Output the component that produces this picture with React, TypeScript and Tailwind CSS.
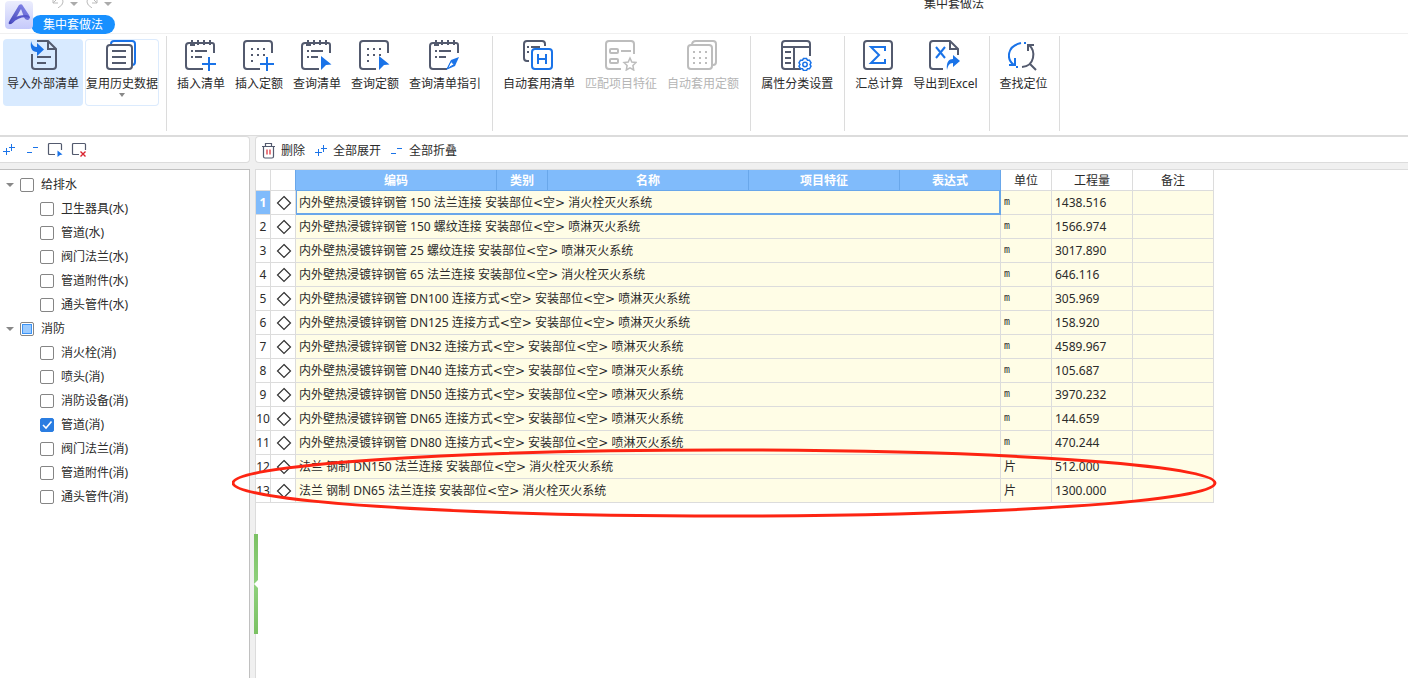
import React from "react";

const INK = "#535a6e";
const BLUE = "#1a73e8";
const MUTED = "#bdbdbd";

interface IconProps {
  children: React.ReactNode;
  color?: string;
}

const Icon: React.FC<IconProps> = ({ children, color = INK }) => (
  <svg className="h-8 w-8 shrink-0" viewBox="0 0 32 32" fill="none" stroke={color} strokeWidth="2" aria-hidden="true">
    {children}
  </svg>
);

const Dots: React.FC<{ points: number[][] }> = ({ points }) => (
  <g fill="currentColor" stroke="none">
    {points.map(([x, y]) => (
      <rect key={`${x}-${y}`} x={x} y={y} width="2" height="2" />
    ))}
  </g>
);

const Notepad = () => (
  <>
    <path d="M29 14V6q0-2-2-2H4Q1 4 1 7v20q0 3 3 3h14" />
    <path d="M7 1v5M13 1v5M19 1v5M25 1v5" />
    <path d="M5 4h5v3H5z" fill={INK} stroke="none" />
    <path d="M6 12h2M10 12h12M6 18h2M10 18h7" />
  </>
);

const DotSheet = () => (
  <>
    <path d="M29 14V5q0-3-3-3H4Q1 2 1 5v22q0 3 3 3h13" />
    <g className="text-[#535a6e]">
      <Dots points={[[8, 9], [14, 9], [20, 9], [8, 15], [14, 15], [20, 15], [8, 21]]} />
    </g>
  </>
);

const Plus = () => <path d="M24 18v14M17 25h14" stroke={BLUE} />;
const Pointer = () => <path d="M20 17l10.500 8.500-5.500.5-5 5z" fill={BLUE} stroke="none" />;

const icons = {
  importList: (
    <Icon>
      <path d="M5 15v12q0 3 3 3h18q3 0 3-3V10l-8-8H10" />
      <path d="M21 2v8h8M10 18h14M10 24h9" />
      <path d="M4 3v-1C5 6 7 8 10 8V4l7 6.500-7 6.500v-4C5 13 3 9 4 3z" fill={BLUE} stroke="none" />
    </Icon>
  ),
  history: (
    <Icon>
      <path d="M5 5q0-3 3-3h18q3 0 3 3v18q0 3-3 3" stroke={BLUE} />
      <rect x="1" y="6" width="25" height="24" rx="3" />
      <path d="M6 12h14M6 18h14M6 24h14" />
    </Icon>
  ),
  insertList: <Icon><Notepad /><Plus /></Icon>,
  insertQuota: <Icon><DotSheet /><Plus /></Icon>,
  queryList: <Icon><Notepad /><Pointer /></Icon>,
  queryQuota: <Icon><DotSheet /><Pointer /></Icon>,
  guide: (
    <Icon>
      <Notepad />
      <path d="M30 18l-8 3-5 10 9-4z" fill={BLUE} stroke="none" />
      <path d="M18.500 29.500l3.500-7 3 3z" fill="#fff" stroke={BLUE} strokeWidth="1" />
    </Icon>
  ),
  autoList: (
    <Icon>
      <path d="M22 7V5q0-3-3-3H4Q1 2 1 5v14q0 3 3 3h2M4 8h2M8 8h9M4 13h2" />
      <rect x="9" y="10" width="20" height="20" rx="3" stroke={BLUE} />
      <path d="M15 15v10M23 15v10M15 20h8" stroke={BLUE} />
    </Icon>
  ),
  matchFeature: (
    <Icon color={MUTED}>
      <path d="M29 15V5q0-3-3-3H4Q1 2 1 5v22q0 3 3 3h12M16 12h10" />
      <rect x="5" y="10" width="8" height="4" rx="1" />
      <rect x="5" y="20" width="8" height="4" rx="1" />
      <path d="M25 19l1.800 4 4.200.5-3.100 3 .8 4.500-3.700-2.200-3.700 2.200.8-4.500-3.100-3 4.200-.5z" strokeWidth="1.500" />
    </Icon>
  ),
  autoQuota: (
    <Icon color={MUTED}>
      <path d="M5 6q0-4 4-4h17q3 0 3 3v18q0 3-3 3" />
      <rect x="1" y="6" width="24" height="24" rx="3" />
      <g className="text-[#bdbdbd]">
        <Dots points={[[6, 12], [12, 12], [18, 12], [6, 18], [12, 18], [18, 18], [6, 23], [12, 23], [18, 23]]} />
      </g>
    </Icon>
  ),
  attributes: (
    <Icon>
      <path d="M29 17V5q0-3-3-3H4Q1 2 1 5v22q0 3 3 3h16M1 8h28M13 8v22M4 13h6M4 19h6M4 24h6" />
      <path d="M22.500 19.500h3l1 1.700h2l1.500 2.600-1 1.700 1 1.700-1.500 2.600h-2l-1 1.700h-3l-1-1.700h-2L18 27.200l1-1.700-1-1.700 1.500-2.600h2z" stroke={BLUE} strokeWidth="1.500" />
      <circle cx="24" cy="25.500" r="2.200" stroke={BLUE} strokeWidth="1.500" />
    </Icon>
  ),
  sum: (
    <Icon>
      <rect x="1" y="2" width="28" height="28" rx="3" />
      <path d="M22 12V8H8l8 8-8 8h14v-4" stroke={BLUE} />
    </Icon>
  ),
  exportExcel: (
    <Icon>
      <path d="M14 30H4q-3 0-3-3V5q0-3 3-3h17l8 8v6" />
      <path d="M21 2v8h8" />
      <path d="M7 8l9 11M16 8L7 19" stroke={BLUE} />
      <path d="M18 31c-1-8 2-11 6-11v-4l7 6-7 6v-4c-4 0-5 3-6 7z" fill={BLUE} stroke="none" />
    </Icon>
  ),
  locate: (
    <Icon>
      <path d="M13 4C-1 7-2 20 6 26M1 26h6v-7M16 4h2M8 28h2" stroke={BLUE} />
      <path d="M20 12V6h6M21 6c7 6 6 21-7 22M22 25l6 6" />
    </Icon>
  ),
};

interface Action {
  label: string;
  icon: React.ReactNode;
  disabled?: boolean;
}

const ribbonGroups: Action[][] = [
  [
    { label: "插入清单", icon: icons.insertList },
    { label: "插入定额", icon: icons.insertQuota },
    { label: "查询清单", icon: icons.queryList },
    { label: "查询定额", icon: icons.queryQuota },
    { label: "查询清单指引", icon: icons.guide },
  ],
  [
    { label: "自动套用清单", icon: icons.autoList },
    { label: "匹配项目特征", icon: icons.matchFeature, disabled: true },
    { label: "自动套用定额", icon: icons.autoQuota, disabled: true },
  ],
  [{ label: "属性分类设置", icon: icons.attributes }],
  [
    { label: "汇总计算", icon: icons.sum },
    { label: "导出到Excel", icon: icons.exportExcel },
  ],
  [{ label: "查找定位", icon: icons.locate }],
];

type CheckState = "off" | "on" | "mixed";

interface TreeNode {
  label: string;
  state: CheckState;
  children?: TreeNode[];
}

const tree: TreeNode[] = [
  {
    label: "给排水",
    state: "off",
    children: [
      { label: "卫生器具(水)", state: "off" },
      { label: "管道(水)", state: "off" },
      { label: "阀门法兰(水)", state: "off" },
      { label: "管道附件(水)", state: "off" },
      { label: "通头管件(水)", state: "off" },
    ],
  },
  {
    label: "消防",
    state: "mixed",
    children: [
      { label: "消火栓(消)", state: "off" },
      { label: "喷头(消)", state: "off" },
      { label: "消防设备(消)", state: "off" },
      { label: "管道(消)", state: "on" },
      { label: "阀门法兰(消)", state: "off" },
      { label: "管道附件(消)", state: "off" },
      { label: "通头管件(消)", state: "off" },
    ],
  },
];

const rows = [
  { name: "内外壁热浸镀锌钢管 150 法兰连接 安装部位<空> 消火栓灭火系统", unit: "m", qty: "1438.516" },
  { name: "内外壁热浸镀锌钢管 150 螺纹连接 安装部位<空> 喷淋灭火系统", unit: "m", qty: "1566.974" },
  { name: "内外壁热浸镀锌钢管 25 螺纹连接 安装部位<空> 喷淋灭火系统", unit: "m", qty: "3017.890" },
  { name: "内外壁热浸镀锌钢管 65 法兰连接 安装部位<空> 消火栓灭火系统", unit: "m", qty: "646.116" },
  { name: "内外壁热浸镀锌钢管 DN100 连接方式<空> 安装部位<空> 喷淋灭火系统", unit: "m", qty: "305.969" },
  { name: "内外壁热浸镀锌钢管 DN125 连接方式<空> 安装部位<空> 喷淋灭火系统", unit: "m", qty: "158.920" },
  { name: "内外壁热浸镀锌钢管 DN32 连接方式<空> 安装部位<空> 喷淋灭火系统", unit: "m", qty: "4589.967" },
  { name: "内外壁热浸镀锌钢管 DN40 连接方式<空> 安装部位<空> 喷淋灭火系统", unit: "m", qty: "105.687" },
  { name: "内外壁热浸镀锌钢管 DN50 连接方式<空> 安装部位<空> 喷淋灭火系统", unit: "m", qty: "3970.232" },
  { name: "内外壁热浸镀锌钢管 DN65 连接方式<空> 安装部位<空> 喷淋灭火系统", unit: "m", qty: "144.659" },
  { name: "内外壁热浸镀锌钢管 DN80 连接方式<空> 安装部位<空> 喷淋灭火系统", unit: "m", qty: "470.244" },
  { name: "法兰 钢制 DN150 法兰连接 安装部位<空> 消火栓灭火系统", unit: "片", qty: "512.000" },
  { name: "法兰 钢制 DN65 法兰连接 安装部位<空> 消火栓灭火系统", unit: "片", qty: "1300.000" },
];

const ExpandIcon = () => (
  <svg className="h-3 w-3" viewBox="0 0 12 12" stroke={BLUE} aria-hidden="true">
    <path d="M0 7.500h7M3.500 4v7M6 3.500h6M8.500 0v7" />
  </svg>
);

const CollapseIcon = () => (
  <svg className="h-3 w-3" viewBox="0 0 12 12" stroke={BLUE} aria-hidden="true">
    <path d="M0 8.500h5M6 3.500h5" />
  </svg>
);

const BoxIcon: React.FC<{ clear?: boolean }> = ({ clear }) => (
  <svg className="h-4 w-4" viewBox="0 0 16 16" fill="none" stroke={INK} aria-hidden="true">
    <path d="M8 12.500H2.500q-1 0-1-1v-9q0-1 1-1h11q1 0 1 1V8" strokeWidth="1.200" />
    {clear ? (
      <path d="M9.500 9.500l5 5M14.500 9.500l-5 5" stroke="#d9232e" strokeWidth="1.400" />
    ) : (
      <path d="M10.500 8.500l5 4-2.500.5-2.500 2z" fill={BLUE} stroke="none" />
    )}
  </svg>
);

const TrashIcon = () => (
  <svg className="h-4 w-4" viewBox="0 0 16 16" fill="none" stroke={INK} aria-hidden="true">
    <path d="M1 3.500h13M4.500 3V.5h6V3M2.500 3.500v10q0 1.500 1.500 1.500h7q1.500 0 1.500-1.500v-10" strokeWidth="1.200" />
    <path d="M6 6.500v5M9 6.500v5" stroke="#d9232e" strokeWidth="1.200" />
  </svg>
);

const Caret = () => (
  <svg className="h-1 w-2" viewBox="0 0 8 4" fill="#888" aria-hidden="true">
    <path d="M0 0h8L4 4z" />
  </svg>
);

const CheckBox: React.FC<{ state: CheckState }> = ({ state }) => (
  <span className="grid h-3.5 w-3.5 place-items-center">
    <input
      type="checkbox"
      defaultChecked={state === "on"}
      ref={(el) => {
        if (el) el.indeterminate = state === "mixed";
      }}
      className="col-start-1 row-start-1 h-3.5 w-3.5 appearance-none rounded-xs border border-[#858585] bg-white checked:border-[#2a7de1] checked:bg-[#2a7de1]"
    />
    {state === "on" && (
      <svg className="pointer-events-none col-start-1 row-start-1 h-3 w-3" viewBox="0 0 12 12" fill="none" stroke="#fff" strokeWidth="1.600" aria-hidden="true">
        <path d="M2 6l3 3 5.500-6.500" />
      </svg>
    )}
    {state === "mixed" && (
      <span className="pointer-events-none col-start-1 row-start-1 h-2.5 w-2.5 border border-[#3d94f5] bg-[#9bcbff]" />
    )}
  </span>
);

const TreeItem: React.FC<{ node: TreeNode }> = ({ node }) => (
  <li>
    <div className={`flex h-6 items-center ${node.children ? "pl-1.5" : "pl-10"}`}>
      {node.children && (
        <button type="button" aria-label={`折叠 ${node.label}`} className="mr-1.5 flex">
          <Caret />
        </button>
      )}
      <label className="flex items-center gap-[7px]">
        <CheckBox state={node.state} />
        {node.label}
      </label>
    </div>
    {node.children && (
      <ul>
        {node.children.map((child) => (
          <TreeItem key={child.label} node={child} />
        ))}
      </ul>
    )}
  </li>
);

const TitleBar = () => (
  <header className="flex h-[34px] border-b border-[#f0f0f0] pl-[5px]">
    <svg className="z-10 mt-px h-7 w-7 shrink-0" viewBox="0 0 28 28" aria-hidden="true">
      <defs>
        <linearGradient id="tile" x1="0" y1="0" x2="0" y2="1">
          <stop offset="0" stopColor="#eceefd" />
          <stop offset="1" stopColor="#c5c9fb" />
        </linearGradient>
        <linearGradient id="mark" x1="1" y1="0" x2="0" y2="1">
          <stop offset="0" stopColor="#8c8ff0" />
          <stop offset="1" stopColor="#4143b5" />
        </linearGradient>
      </defs>
      <rect width="28" height="28" rx="4" fill="url(#tile)" />
      <path d="M14 4q3-2 4 1l6 9q2 4-1 5-3 0-4-3l-3-8-5 9q-3 7-7 6-1-1 1-4z" fill="url(#mark)" />
      <path d="M6 20q6-7 16-6 3 1 3 3-9-3-18 5z" fill="#5557cb" />
    </svg>
    <div className="min-w-0 flex-1">
      <div className="flex h-[15px] overflow-hidden pl-[19px]">
        <button type="button" aria-label="撤销" className="-mt-2 flex h-4 items-center">
          <svg className="h-4 w-3" viewBox="0 0 12 16" fill="none" stroke="#bbb" aria-hidden="true">
            <path d="M1 6v5h5M1 11l4-4q6-3 6 3 0 3-5 6" />
          </svg>
        </button>
        <span className="-mt-1 ml-1.5 flex h-4 items-center opacity-70"><Caret /></span>
        <button type="button" aria-label="恢复" className="-mt-2 ml-2 flex h-4 items-center">
          <svg className="h-4 w-3" viewBox="0 0 12 16" fill="none" stroke="#bbb" aria-hidden="true">
            <path d="M11 6v5H6M11 11L7 7Q1 4 1 10q0 3 5 6" />
          </svg>
        </button>
        <span className="-mt-1 ml-1.5 flex h-4 items-center opacity-70"><Caret /></span>
        <h1 className="-mt-1 mr-[424px] ml-auto leading-4">集中套做法</h1>
      </div>
      <button type="button" className="-ml-0.5 block h-[19px] rounded-full bg-[#1890ff] px-3 leading-[19px] text-white">
        集中套做法
      </button>
    </div>
  </header>
);

const Ribbon = () => (
  <nav className="flex h-[102px] border-b border-[#dcdcdc] pt-0.5 pb-1">
    <div className="flex items-start gap-0.5 border-r border-[#dcdcdc] pt-[3px] pr-[7px] pl-[3px]">
      <button type="button" className="flex h-[67px] w-20 flex-col items-center rounded-sm bg-[#d8eaff]">
        {icons.importList}
        <span className="mt-[3px] leading-5 whitespace-nowrap">导入外部清单</span>
      </button>
      <button type="button" className="flex h-[67px] w-[74px] flex-col items-center rounded-sm shadow-[inset_0_0_0_1px_#dcebfd]">
        {icons.history}
        <span className="mt-[3px] leading-5 whitespace-nowrap">复用历史数据</span>
        <svg className="-mt-px h-1 w-1.5" viewBox="0 0 6 4" fill="#888" aria-hidden="true">
          <path d="M0 0h6L3 4z" />
        </svg>
      </button>
    </div>
    {ribbonGroups.map((group) => (
      <div key={group[0].label} className="flex items-start gap-2.5 border-r border-[#dcdcdc] pt-[3px] pr-[11px] pl-2.5">
        {group.map((action) => (
          <button
            key={action.label}
            type="button"
            disabled={action.disabled}
            className="flex flex-col items-center disabled:text-[#b5b5b5]"
          >
            {action.icon}
            <span className="mt-[3px] leading-5 whitespace-nowrap">{action.label}</span>
          </button>
        ))}
      </div>
    ))}
  </nav>
);

const Sidebar = () => (
  <aside className="flex w-[250px] shrink-0 flex-col">
    <div className="flex h-[27px] items-center rounded-r-sm border border-l-0 border-[#dcdcdc] bg-white pl-[3px]">
      <button type="button" aria-label="全部展开"><ExpandIcon /></button>
      <button type="button" aria-label="全部折叠" className="ml-3"><CollapseIcon /></button>
      <button type="button" aria-label="全选" className="ml-2"><BoxIcon /></button>
      <button type="button" aria-label="取消选择" className="ml-2"><BoxIcon clear /></button>
    </div>
    <div className="mt-1.5 flex-1 border-t border-r border-[#c0c0c0] bg-white pt-[3px]">
      <ul>
        {tree.map((node) => (
          <TreeItem key={node.label} node={node} />
        ))}
      </ul>
    </div>
  </aside>
);

const Splitter = () => (
  <div className="relative w-[5px] shrink-0">
    <button
      type="button"
      aria-label="收起侧栏"
      className="absolute top-[398px] left-1 z-10 flex h-[100px] w-1 items-center bg-linear-to-b from-[#7bc163] via-[#8fd07c] to-[#7bc163]"
    >
      <svg className="h-2 w-1" viewBox="0 0 4 8" fill="#fff" aria-hidden="true">
        <path d="M4 0v8L0 4z" />
      </svg>
    </button>
  </div>
);

const headCell = "h-[21px] border-r border-b border-[#dcdcdc] p-0 pt-px font-normal";
const blueHead = "h-[21px] border-r border-b border-[#69a7ea] bg-[#80bbfb] p-0 pt-px font-bold text-white";
const cell = "border-r border-b border-[#dcdcdc] p-0";
const selectedCell = "border-r border-b border-[#69a7ea] p-0 shadow-[inset_1px_-1px_#69a7ea,inset_-1px_0_#69a7ea]";

// the angle brackets are set in a wider face than the rest of the name
const ItemName: React.FC<{ name: string }> = ({ name }) => (
  <>
    {name.split(/([<>])/).map((part, i) =>
      part === "<" || part === ">" ? (
        <span key={i} className="font-['DejaVu_Sans'] leading-none">{part}</span>
      ) : (
        part
      )
    )}
  </>
);

const QuantityTable = () => (
  <table className="w-[958px] table-fixed border-separate border-spacing-0 leading-[19px]">
    <colgroup>
      <col className="w-[15px]" />
      <col className="w-[25px]" />
      <col className="w-[201px]" />
      <col className="w-[51px]" />
      <col className="w-[201px]" />
      <col className="w-[151px]" />
      <col className="w-[101px]" />
      <col className="w-[51px]" />
      <col className="w-[81px]" />
      <col className="w-[81px]" />
    </colgroup>
    <thead>
      <tr>
        <th className={headCell} />
        <th className="h-[21px] border-r border-b border-r-[#69a7ea] border-b-[#dcdcdc] p-0" />
        <th className={blueHead}>编码</th>
        <th className={blueHead}>类别</th>
        <th className={blueHead}>名称</th>
        <th className={blueHead}>项目特征</th>
        <th className={blueHead}>表达式</th>
        <th className={headCell}>单位</th>
        <th className={headCell}>工程量</th>
        <th className={headCell}>备注</th>
      </tr>
    </thead>
    <tbody>
      {rows.map((row, i) => (
        <tr key={row.name} className="h-6">
          <td className={`${cell} text-center ${i === 0 ? "bg-[#80bbfb] font-bold text-white" : ""}`}>{i + 1}</td>
          <td className={`${cell} pl-px`}>
            <svg className="mx-auto h-4 w-4" viewBox="0 0 16 16" fill="none" stroke="#333" strokeWidth="1.200" aria-hidden="true">
              <path d="M8 1.500L14.500 8 8 14.500 1.500 8z" />
            </svg>
          </td>
          <td colSpan={5} className={`${i === 0 ? selectedCell : cell} bg-[#fffde6] pl-[3px] whitespace-nowrap`}>
            <ItemName name={row.name} />
          </td>
          <td className={`${cell} bg-[#fffde6] pl-[3px]`}>
            <span className={row.unit === "m" ? "block font-['Liberation_Mono'] text-[10px] leading-[19px]" : "block"}>{row.unit}</span>
          </td>
          <td className={`${cell} bg-[#fffde6] pl-[3px]`}>{row.qty}</td>
          <td className={`${cell} bg-[#fffde6]`} />
        </tr>
      ))}
    </tbody>
  </table>
);

export default function App() {
  return (
    <div className="flex min-h-screen flex-col bg-white font-['Noto_Sans','Noto_Sans_CJK_SC',sans-serif] text-xs text-[#2b2b2b]">
      <TitleBar />
      <Ribbon />
      <div className="flex flex-1 bg-[#f0f0f0]">
        <Sidebar />
        <Splitter />
        <main className="flex min-w-0 flex-1 flex-col">
          <div className="flex h-[27px] items-center rounded-l-sm border border-r-0 border-[#dcdcdc] bg-white pt-0.5 pl-[5px]">
            <button type="button" className="flex items-center gap-1">
              <TrashIcon />
              删除
            </button>
            <button type="button" className="ml-2.5 flex items-center gap-1.5">
              <ExpandIcon />
              全部展开
            </button>
            <button type="button" className="ml-2.5 flex items-center gap-1.5">
              <CollapseIcon />
              全部折叠
            </button>
          </div>
          <div className="mt-1.5 flex-1 border-t border-l border-[#dcdcdc] bg-white">
            <div className="relative">
              <QuantityTable />
              <svg
                className="pointer-events-none absolute top-[278px] -left-6 z-20 h-[70px] w-[985px]"
                viewBox="0 0 985 70"
                fill="none"
                stroke="#fd2412"
                strokeWidth="3"
                aria-hidden="true"
              >
                <ellipse cx="492" cy="35" rx="491" ry="33" />
              </svg>
            </div>
          </div>
        </main>
      </div>
    </div>
  );
}
